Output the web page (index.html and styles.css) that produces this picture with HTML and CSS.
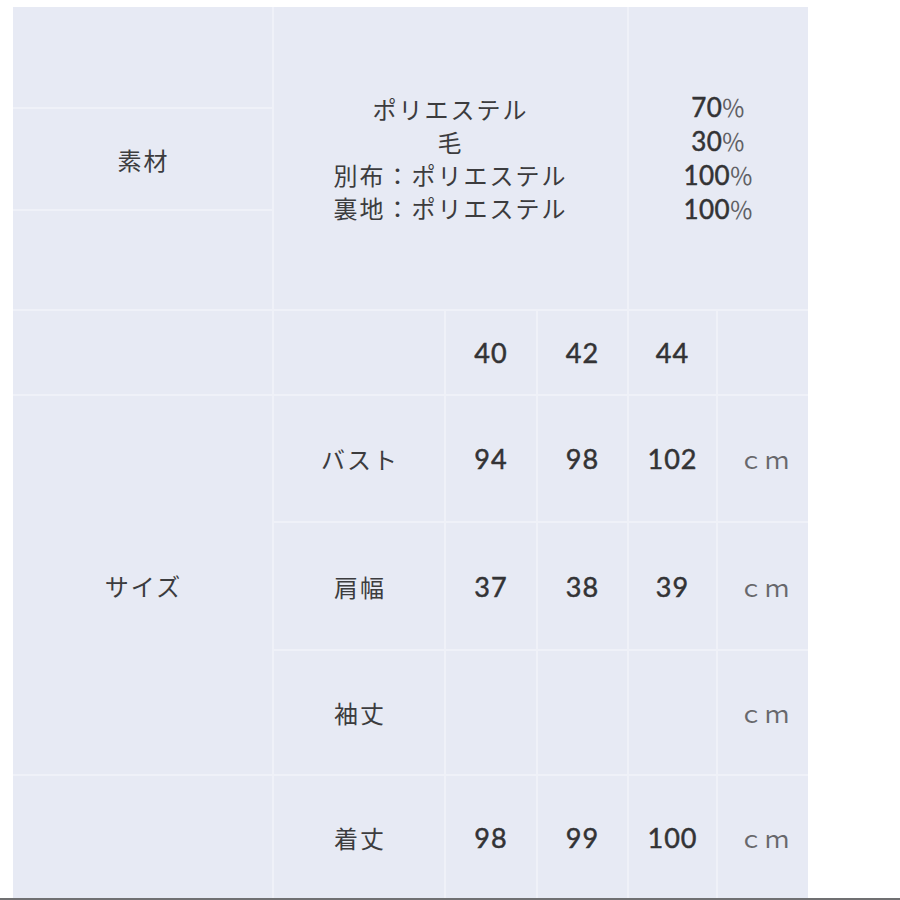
FILE: index.html
```html
<!DOCTYPE html>
<html lang="ja">
<head>
<meta charset="utf-8">
<title>サイズ表</title>
<link rel="stylesheet" href="styles.css">
</head>
<body>
<div class="page">
  <div class="sheet">
    <div class="cell"></div>
    <div class="cell material">
      <div>ポリエステル</div>
      <div>毛</div>
      <div>別布：ポリエステル</div>
      <div>裏地：ポリエステル</div>
    </div>
    <div class="cell ratio">
      <div>70<span class="pc">％</span></div>
      <div>30<span class="pc">％</span></div>
      <div>100<span class="pc">％</span></div>
      <div>100<span class="pc">％</span></div>
    </div>
    <div class="cell jp">素材</div>
    <div class="cell"></div>

    <div class="cell"></div>
    <div class="cell"></div>
    <div class="cell num">40</div>
    <div class="cell num">42</div>
    <div class="cell num">44</div>
    <div class="cell"></div>

    <div class="cell jp size">サイズ</div>
    <div class="cell jp">バスト</div>
    <div class="cell num">94</div>
    <div class="cell num">98</div>
    <div class="cell num">102</div>
    <div class="cell unit">ｃｍ</div>

    <div class="cell jp">肩幅</div>
    <div class="cell num">37</div>
    <div class="cell num">38</div>
    <div class="cell num">39</div>
    <div class="cell unit">ｃｍ</div>

    <div class="cell jp">袖丈</div>
    <div class="cell num"></div>
    <div class="cell num"></div>
    <div class="cell num"></div>
    <div class="cell unit">ｃｍ</div>

    <div class="cell"></div>
    <div class="cell jp">着丈</div>
    <div class="cell num">98</div>
    <div class="cell num">99</div>
    <div class="cell num">100</div>
    <div class="cell unit">ｃｍ</div>
  </div>
  <div class="rule"></div>
</div>
</body>
</html>
```
FILE: styles.css
```css
html, body {
  margin: 0;
  padding: 0;
  background: #ffffff;
}

.page {
  width: 900px;
  height: 900px;
  box-sizing: border-box;
  padding-top: 7px;
  display: flex;
  flex-direction: column;
}

.sheet {
  margin-left: 13px;
  width: 795px;
  display: grid;
  grid-template-columns: 259px 170px 90px 89px 87px 90px;
  grid-template-rows: 100px 100px 98px 83px 125px 126px 123px 122px;
  gap: 2px;
  background: #eff1f8;
}

.cell {
  background: #e7eaf4;
  display: flex;
  align-items: center;
  justify-content: center;
  color: #3c3c3e;
  font-family: "Noto Sans CJK JP", sans-serif;
  font-size: 24px;
  letter-spacing: 1px;
}

.material {
  grid-column: span 3;
  grid-row: span 3;
  flex-direction: column;
  line-height: 33px;
  letter-spacing: 2px;
}

.ratio {
  grid-column: span 2;
  grid-row: span 3;
  flex-direction: column;
  line-height: 33px;
  font-family: Lato, sans-serif;
  font-size: 26px;
  letter-spacing: 0.5px;
  color: #333335;
  -webkit-text-stroke: 0.5px #333335;
}

.pc {
  font-family: "Noto Sans CJK JP", sans-serif;
  font-size: 24px;
  color: #606064;
  -webkit-text-stroke: 0;
  margin-left: -1px;
}

.jp {
  letter-spacing: 2px;
  padding-left: 2px;
}

.size {
  grid-row: span 3;
}

.num {
  font-family: Lato, sans-serif;
  font-size: 27px;
  letter-spacing: 1px;
  color: #333335;
  -webkit-text-stroke: 0.5px #333335;
}

.unit {
  font-size: 24px;
  color: #68686c;
  letter-spacing: 2px;
  padding-left: 4px;
}

.rule {
  height: 2px;
  width: 900px;
  background: #707072;
}
```
